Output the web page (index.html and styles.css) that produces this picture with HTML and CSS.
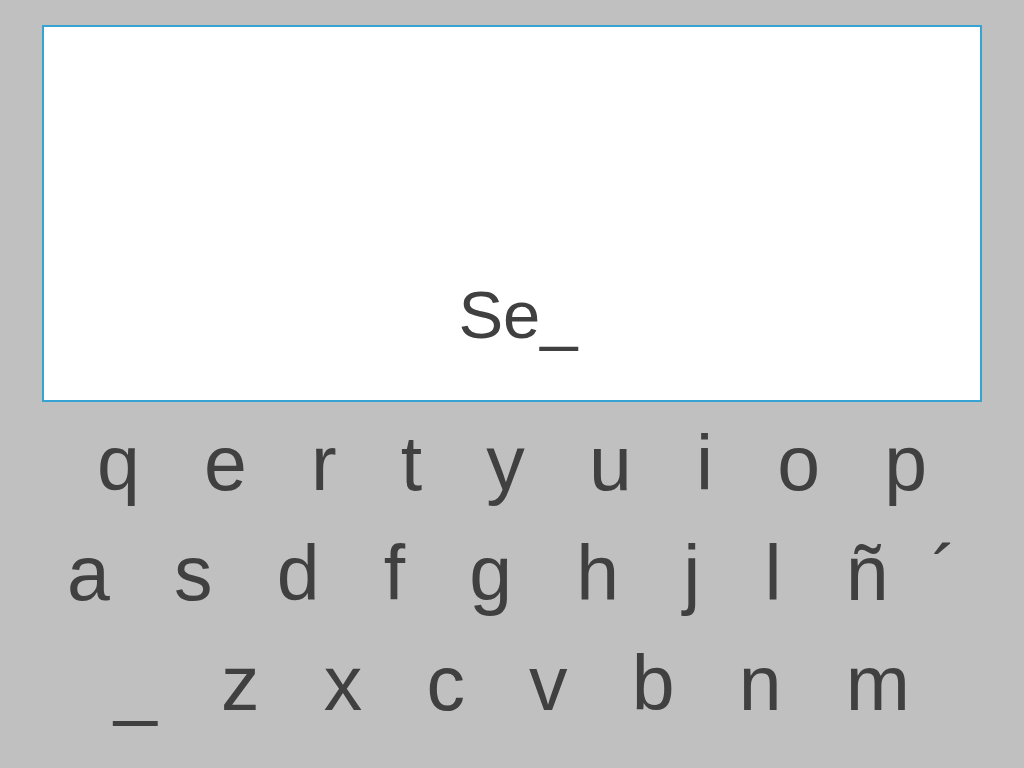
FILE: index.html
```html
<!DOCTYPE html>
<html lang="es">
<head>
<meta charset="utf-8">
<title>Teclado</title>
<link rel="stylesheet" href="styles.css">
</head>
<body>
<div class="screen">
  <div class="display"><span class="typed">Se_</span></div>
  <div class="keyboard">
    <div class="row">q   e   r   t   y   u   i   o   p</div>
    <div class="row">a   s   d   f   g   h   j   l   ñ  ´</div>
    <div class="row">_   z   x   c   v   b   n   m</div>
  </div>
</div>
</body>
</html>
```
FILE: styles.css
```css
html, body {
  margin: 0;
  padding: 0;
}
body {
  background: #c0c0c0;
  width: 1024px;
  height: 768px;
  overflow: hidden;
  font-family: "Liberation Sans", Arial, sans-serif;
  color: #404040;
}
.screen {
  display: flex;
  flex-direction: column;
  align-items: center;
  padding-top: 25px;
}
.display {
  box-sizing: border-box;
  width: 940px;
  height: 377px;
  background: #ffffff;
  border: 2px solid #36a3d2;
  display: flex;
  align-items: flex-end;
  justify-content: center;
  padding-bottom: 52px;
  padding-left: 12px;
}
.typed {
  font-size: 67px;
  line-height: 67px;
}
.keyboard {
  margin-top: 6px;
  width: 1024px;
  display: flex;
  flex-direction: column;
}
.row {
  font-size: 77px;
  line-height: 110px;
  white-space: pre;
  text-align: center;
}
```
